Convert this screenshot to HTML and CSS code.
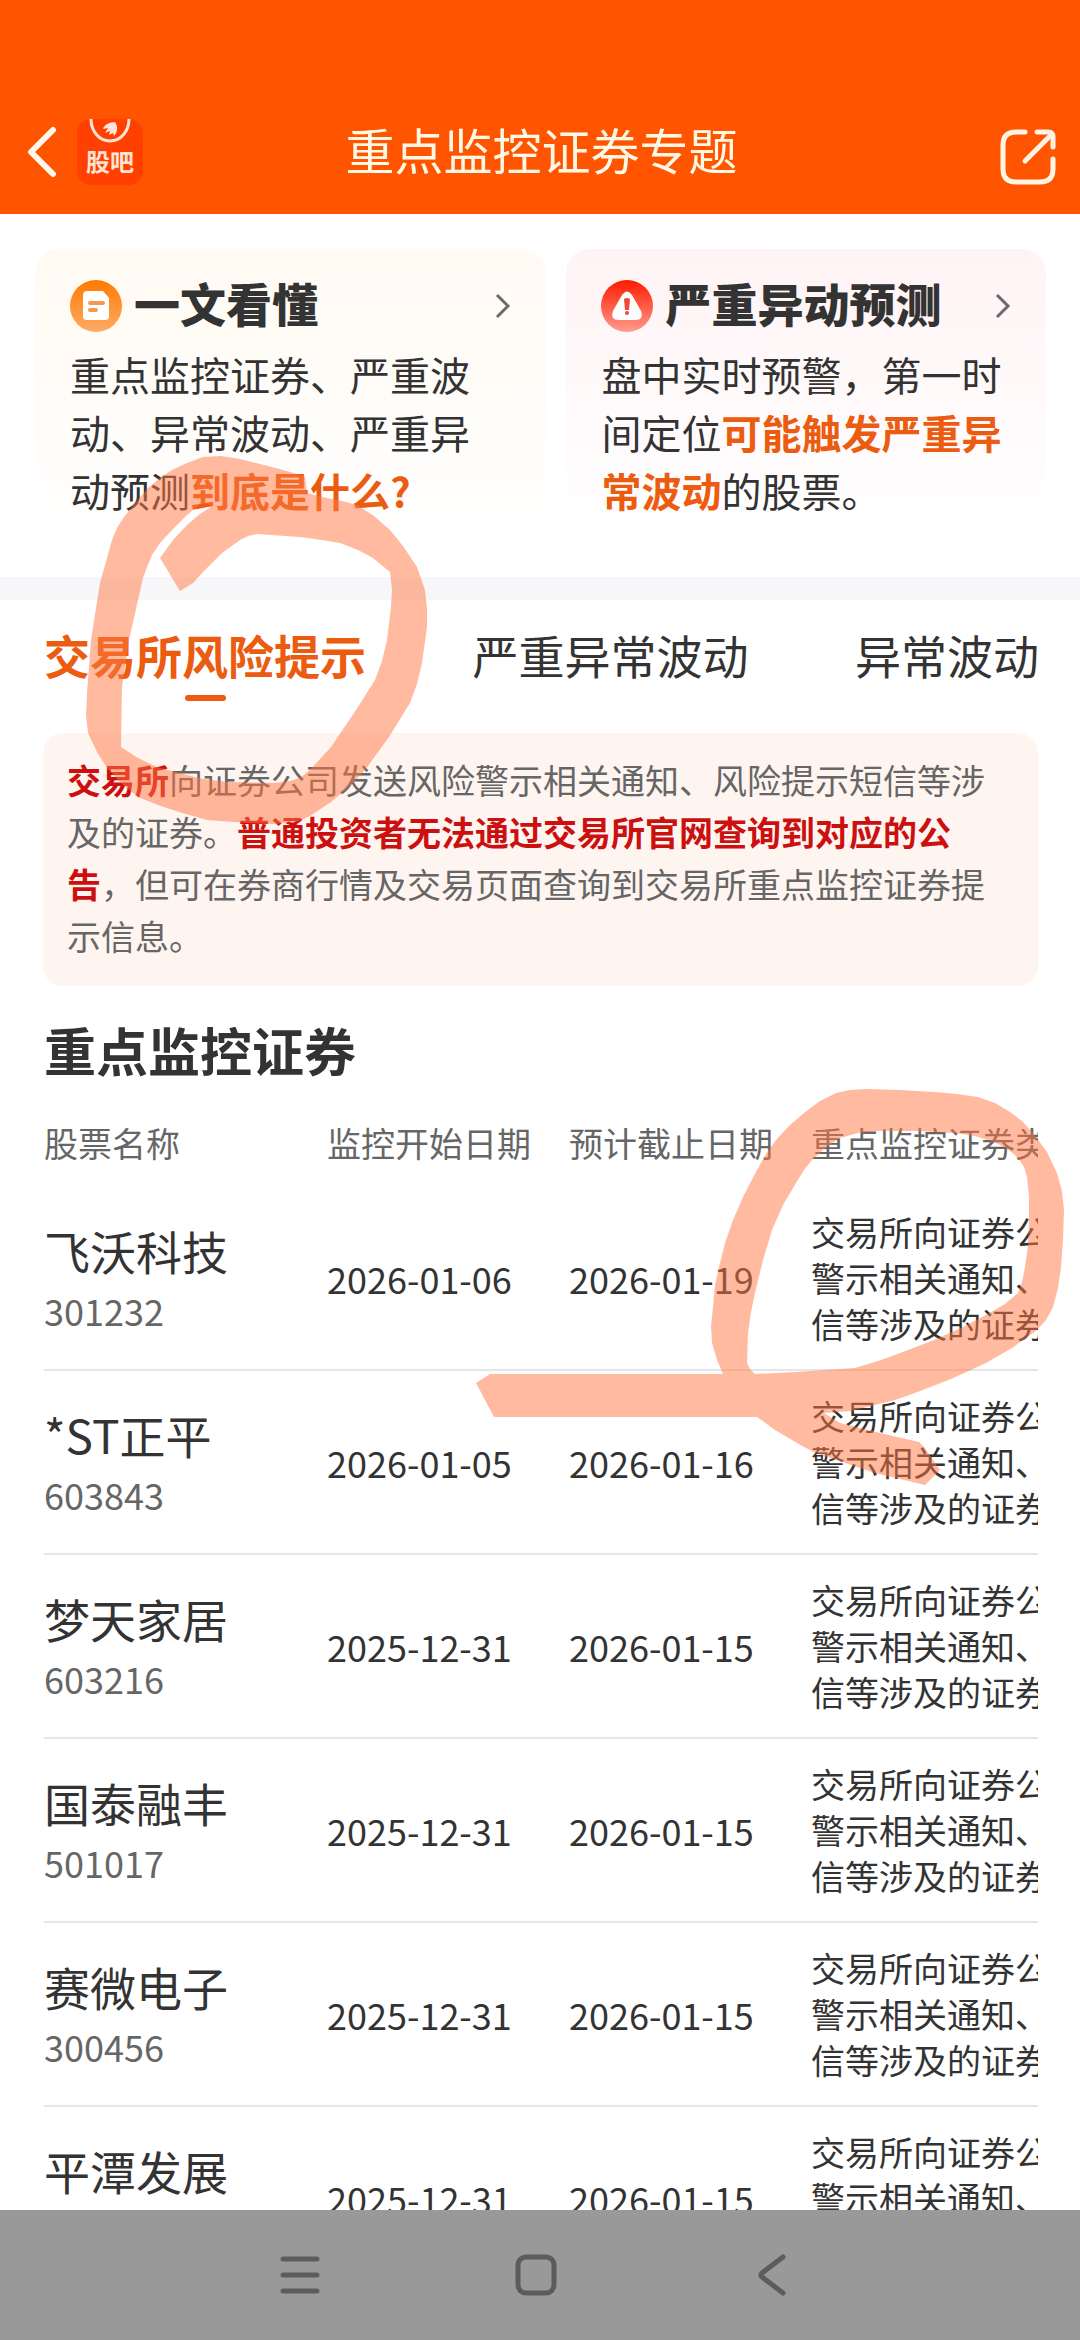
FILE: index.html
```html
<!DOCTYPE html>
<html lang="zh-CN">
<head>
    <meta charset="UTF-8">
    <meta name="viewport" content="width=device-width, initial-scale=1.0">
    <title>重点监控证券专题</title>
    <link rel="stylesheet" href="styles.css">
</head>
<body>
    <header class="header">
        <div class="header-left">
            <button class="icon-btn" type="button" aria-label="返回">
                <svg width="30" height="52" viewBox="0 0 30 52"><path d="M26 4 4 26l22 22" fill="none" stroke="#fff8ea" stroke-width="6" stroke-linecap="round" stroke-linejoin="round"/></svg>
            </button>
            <a class="app-logo" href="#" aria-label="股吧">
                <svg width="66" height="30" viewBox="0 0 66 30">
                    <path d="M14 0c0 12 8 22 19 22S52 12 52 0" fill="none" stroke="#ffe3d6" stroke-width="3"/>
                    <path d="M38 3c-6 0-11 3-12 7l5-1-3 5 5-2-1 4 4-2 1 3c4-4 4-10 1-14z" fill="#ffe3d6"/>
                </svg>
                <span>股吧</span>
            </a>
        </div>
        <h1 class="header-title">重点监控证券专题</h1>
        <button class="icon-btn share" type="button" aria-label="分享">
            <svg width="56" height="56" viewBox="0 0 56 56" fill="none" stroke="#fff3e4" stroke-width="5" stroke-linecap="round" stroke-linejoin="round">
                <path d="M25 3H16Q3 3 3 16v24q0 13 13 13h24q13 0 13-13V30"/>
                <path d="M37 3h11q5 0 5 5v10"/>
                <path d="M51 6 25 32"/>
            </svg>
        </button>
    </header>

    <main class="main">
        <section class="cards">
            <a class="card card-guide" href="#">
                <div class="card-head">
                    <svg width="52" height="52" viewBox="0 0 52 52">
                        <defs><linearGradient id="orange" x1="0" y1="0" x2="0" y2="1"><stop offset="0" stop-color="#ff7a00"/><stop offset="1" stop-color="#ffab66"/></linearGradient></defs>
                        <circle cx="26" cy="26" r="26" fill="url(#orange)"/>
                        <path d="M17 11h16l6 7v18q0 4-4 4H17q-4 0-4-4V15q0-4 4-4z" fill="#fff"/>
                        <path d="M20 23h13M20 30h6" stroke="#f29a4a" stroke-width="4" stroke-linecap="round"/>
                    </svg>
                    <h2>一文看懂</h2>
                    <svg class="arrow" width="16" height="26" viewBox="0 0 16 26"><path d="m2 2 11 11L2 24" fill="none" stroke="#6b6b6b" stroke-width="3"/></svg>
                </div>
                <p>重点监控证券、严重波动、异常波动、严重异动预测<strong>到底是什么?</strong></p>
            </a>
            <a class="card card-alert" href="#">
                <div class="card-head">
                    <svg width="52" height="52" viewBox="0 0 52 52">
                        <defs><linearGradient id="red" x1="0" y1="0" x2="0" y2="1"><stop offset="0" stop-color="#ff1a00"/><stop offset="1" stop-color="#ff9c8c"/></linearGradient></defs>
                        <circle cx="26" cy="26" r="26" fill="url(#red)"/>
                        <path d="M21 15q5-7 10 0l9 16q3 9-6 9H18q-9 0-6-9z" fill="#fff"/>
                        <path d="M23 19q3-2 6 0l-1 11h-4z" fill="#f0483a"/>
                        <circle cx="26" cy="33" r="2" fill="#f0483a"/>
                    </svg>
                    <h2>严重异动预测</h2>
                    <svg class="arrow" width="16" height="26" viewBox="0 0 16 26"><path d="m2 2 11 11L2 24" fill="none" stroke="#6b6b6b" stroke-width="3"/></svg>
                </div>
                <p>盘中实时预警，第一时间定位<strong>可能触发严重异常波动</strong>的股票。</p>
            </a>
        </section>

        <nav class="tabs">
            <button class="tab active" type="button">交易所风险提示</button>
            <button class="tab" type="button">严重异常波动</button>
            <button class="tab" type="button">异常波动</button>
        </nav>

        <p class="notice"><strong>交易所</strong>向证券公司发送风险警示相关通知、风险提示短信等涉及的证券。<strong>普通投资者无法通过交易所官网查询到对应的公告</strong>，但可在券商行情及交易页面查询到交易所重点监控证券提示信息。</p>

        <section class="stocks">
            <h2 class="stocks-title">重点监控证券</h2>
            <div class="table-wrap">
                <table class="stock-table">
                    <thead>
                        <tr>
                            <th class="col-name">股票名称</th>
                            <th class="col-date">监控开始日期</th>
                            <th class="col-date">预计截止日期</th>
                            <th class="col-type">重点监控证券类型</th>
                        </tr>
                    </thead>
                    <tbody>
                        <tr>
                            <td><div class="name">飞沃科技</div><div class="code">301232</div></td>
                            <td>2026-01-06</td>
                            <td>2026-01-19</td>
                            <td class="type">交易所向证券公司发送风险警示相关通知、风险提示短信等涉及的证券</td>
                        </tr>
                        <tr>
                            <td><div class="name">*ST正平</div><div class="code">603843</div></td>
                            <td>2026-01-05</td>
                            <td>2026-01-16</td>
                            <td class="type">交易所向证券公司发送风险警示相关通知、风险提示短信等涉及的证券</td>
                        </tr>
                        <tr>
                            <td><div class="name">梦天家居</div><div class="code">603216</div></td>
                            <td>2025-12-31</td>
                            <td>2026-01-15</td>
                            <td class="type">交易所向证券公司发送风险警示相关通知、风险提示短信等涉及的证券</td>
                        </tr>
                        <tr>
                            <td><div class="name">国泰融丰</div><div class="code">501017</div></td>
                            <td>2025-12-31</td>
                            <td>2026-01-15</td>
                            <td class="type">交易所向证券公司发送风险警示相关通知、风险提示短信等涉及的证券</td>
                        </tr>
                        <tr>
                            <td><div class="name">赛微电子</div><div class="code">300456</div></td>
                            <td>2025-12-31</td>
                            <td>2026-01-15</td>
                            <td class="type">交易所向证券公司发送风险警示相关通知、风险提示短信等涉及的证券</td>
                        </tr>
                        <tr>
                            <td><div class="name">平潭发展</div><div class="code">000592</div></td>
                            <td>2025-12-31</td>
                            <td>2026-01-15</td>
                            <td class="type">交易所向证券公司发送风险警示相关通知、风险提示短信等涉及的证券</td>
                        </tr>
                    </tbody>
                </table>
            </div>
        </section>
    </main>

    <footer class="navbar">
        <button class="icon-btn" type="button" aria-label="最近任务">
            <svg width="44" height="44" viewBox="0 0 44 44"><path d="M5 6h34M5 22h34M5 38h34" stroke="#5c5c5c" stroke-width="5" stroke-linecap="round"/></svg>
        </button>
        <button class="icon-btn" type="button" aria-label="主屏幕">
            <svg width="44" height="44" viewBox="0 0 44 44"><rect x="4" y="4" width="36" height="36" rx="8" fill="none" stroke="#5c5c5c" stroke-width="5"/></svg>
        </button>
        <button class="icon-btn" type="button" aria-label="返回">
            <svg width="44" height="44" viewBox="0 0 44 44"><path d="M33 4 12 20q-2 2 0 4l21 16" fill="none" stroke="#5c5c5c" stroke-width="5" stroke-linecap="round" stroke-linejoin="round"/></svg>
        </button>
    </footer>

    <!-- highlighter marks -->
    <svg class="marker" viewBox="0 0 1080 2340" preserveAspectRatio="xMidYMin meet" aria-hidden="true">
        <path d="M180 591 160 558 173 540 187 525 200 514 212 506 206 503 199 505 187 515 172 530 160 543 152 555 147 567 143 578 138 600 129 640 122 687 121 747 138 758 157 767 179 773 203 779 227 782 275 783 290 781 300 778 310 770 331 747 358 707 375 680 382 661 387 640 391 607 392 590 390 572 373 558 358 550 340 543 322 540 300 537 257 534 248 536 240 540 222 553 205 570 193 583zM203 457 221 456 240 459 264 465 287 471 305 477 307 493 327 498 342 501 357 505 374 516 390 530 403 546 417 567 425 590 427 609 427 627 422 663 417 684 410 703 389 737 365 770 350 786 331 802 310 816 296 822 273 824 248 823 207 820 179 812 158 805 138 797 122 784 107 768 97 752 88 733 86 715 87 693 91 640 100 583 112 540 117 528 124 517 135 503 148 488 160 478 172 470 187 463z" fill-rule="evenodd"/>
        <path d="M476 1383 490 1374H723L717 1360 712 1343 711 1326 713 1307 715 1285 719 1267 725 1243 733 1220 744 1195 757 1170 766 1154 776 1140 789 1126 804 1113 820 1101 836 1093 850 1090 867 1089 900 1090 934 1092 957 1094 978 1097 995 1103 1010 1112 1022 1121 1033 1133 1047 1152 1057 1173 1062 1191 1064 1210 1063 1240 1061 1267 1058 1288 1053 1307 1046 1320 1037 1330 1012 1348 986 1363 951 1379 915 1393 895 1400 875 1405 850 1411 824 1413 840 1423 880 1433 919 1442 924 1447 940 1470 925 1485 900 1479 875 1473 845 1463 816 1453 804 1447 792 1440 775 1430 757 1417H494zM755 1374 796 1372 855 1368 875 1362 895 1355 934 1340 961 1328 986 1315 1005 1304 1018 1293 1022 1282 1025 1267 1028 1245 1029 1220 1029 1197 1027 1177 1024 1167 1018 1158 1008 1149 994 1142 975 1136 954 1133 917 1131 879 1131 858 1133 840 1138 825 1148 812 1160 804 1170 796 1183 783 1205 772 1230 763 1260 755 1293 751 1312 748 1333 747 1363 750 1369z" fill-rule="evenodd"/>
    </svg>
</body>
</html>
```
FILE: styles.css
```css
* {
    box-sizing: border-box;
}
body {
    margin: 0;
    height: 100vh;
    display: flex;
    flex-direction: column;
    position: relative;
    overflow: hidden;
    background-color: #ffffff;
    color: #333333;
    font-family: "Noto Sans CJK SC", sans-serif;
}
h1, h2, p {
    margin: 0;
}
button {
    font-family: inherit;
    color: inherit;
    border: none;
    background: none;
    padding: 0;
}
a {
    color: inherit;
    text-decoration: none;
}
svg {
    display: block;
    flex-shrink: 0;
}

/* top bar */
.header {
    display: grid;
    grid-template-columns: 1fr auto 1fr;
    align-items: center;
    height: 214px;
    padding: 90px 24px 0 27px;
    background-color: #ff5500;
    flex-shrink: 0;
}
.header-left {
    display: flex;
    align-items: center;
    gap: 20px;
}
.header-title {
    padding-bottom: 6px;
    font-size: 49px;
    font-weight: 400;
    line-height: 64px;
    color: #fff8e5;
}
.app-logo {
    width: 66px;
    height: 66px;
    border-radius: 14px;
    background-color: #ff4000;
    color: #ffe3d6;
    font-size: 24px;
    font-weight: 700;
    line-height: 24px;
    text-align: center;
}
.share {
    justify-self: end;
    padding-top: 10px;
}

/* intro cards */
.main {
    flex: 1;
    min-height: 0;
    overflow: hidden;
}
.cards {
    display: grid;
    grid-template-columns: 16fr 15fr;
    gap: 20px;
    padding: 35px 34px 36px 35px;
    border-bottom: 23px solid #f7f7fa;
}
.card {
    padding: 30px 35px 22px;
    border-radius: 24px;
}
.card-guide {
    background: linear-gradient(#fffaf2, #ffffff);
}
.card-alert {
    background: linear-gradient(#fff3f5, #ffffff);
}
.card-head {
    display: flex;
    align-items: center;
    gap: 12px;
    height: 54px;
    margin-bottom: 12px;
}
.card-head h2 {
    flex: 1;
    padding-bottom: 8px;
    font-size: 46px;
    font-weight: 900;
    line-height: 54px;
}
.card p {
    max-width: 10em;
    font-size: 40px;
    line-height: 58px;
}
.card strong {
    color: #eb5c10;
}

/* tabs */
.tabs {
    display: flex;
    justify-content: space-between;
    padding: 21px 41px 32px 44px;
}
.tab {
    display: flex;
    flex-direction: column;
    align-items: center;
    gap: 8px;
    font-size: 46px;
    line-height: 66px;
}
.tab.active {
    color: #eb5c10;
    font-weight: 700;
}
.tab::after {
    content: "";
    width: 41px;
    height: 6px;
    border-radius: 3px;
}
.tab.active::after {
    background-color: #eb5c10;
}

.notice {
    margin: 0 42px 0 43px;
    padding: 21px 24px 24px;
    border-radius: 20px;
    background-color: #fff5f0;
    color: #666666;
    font-size: 34px;
    line-height: 52px;
}
.notice strong {
    color: #cc1010;
}

/* stock list */
.stocks {
    padding: 32px 42px 0 44px;
}
.stocks-title {
    margin-bottom: 16px;
    font-size: 52px;
    font-weight: 700;
    line-height: 64px;
}
.table-wrap {
    overflow: hidden;
}
.stock-table {
    width: 1200px;
    table-layout: fixed;
    border-collapse: collapse;
    font-size: 36px;
}
.stock-table th {
    height: 88px;
    padding: 0;
    color: #666666;
    font-size: 34px;
    font-weight: 400;
    text-align: left;
}
.stock-table td {
    height: 184px;
    padding: 0;
    border-bottom: 2px solid #e6e6e6;
}
.col-name {
    width: 283px;
}
.col-date {
    width: 242px;
}
.name {
    font-size: 46px;
    line-height: 64px;
}
.code {
    color: #666666;
    line-height: 56px;
}
.stock-table .type {
    padding-right: 20px;
    font-size: 34px;
    line-height: 46px;
}

/* system navigation */
.navbar {
    display: flex;
    justify-content: center;
    align-items: center;
    gap: 192px;
    height: 130px;
    padding-right: 8px;
    background-color: #999999;
    flex-shrink: 0;
}

.marker {
    position: absolute;
    top: 0;
    left: 0;
    width: 100%;
    fill: rgba(255, 117, 65, 0.5);
    pointer-events: none;
}
```
